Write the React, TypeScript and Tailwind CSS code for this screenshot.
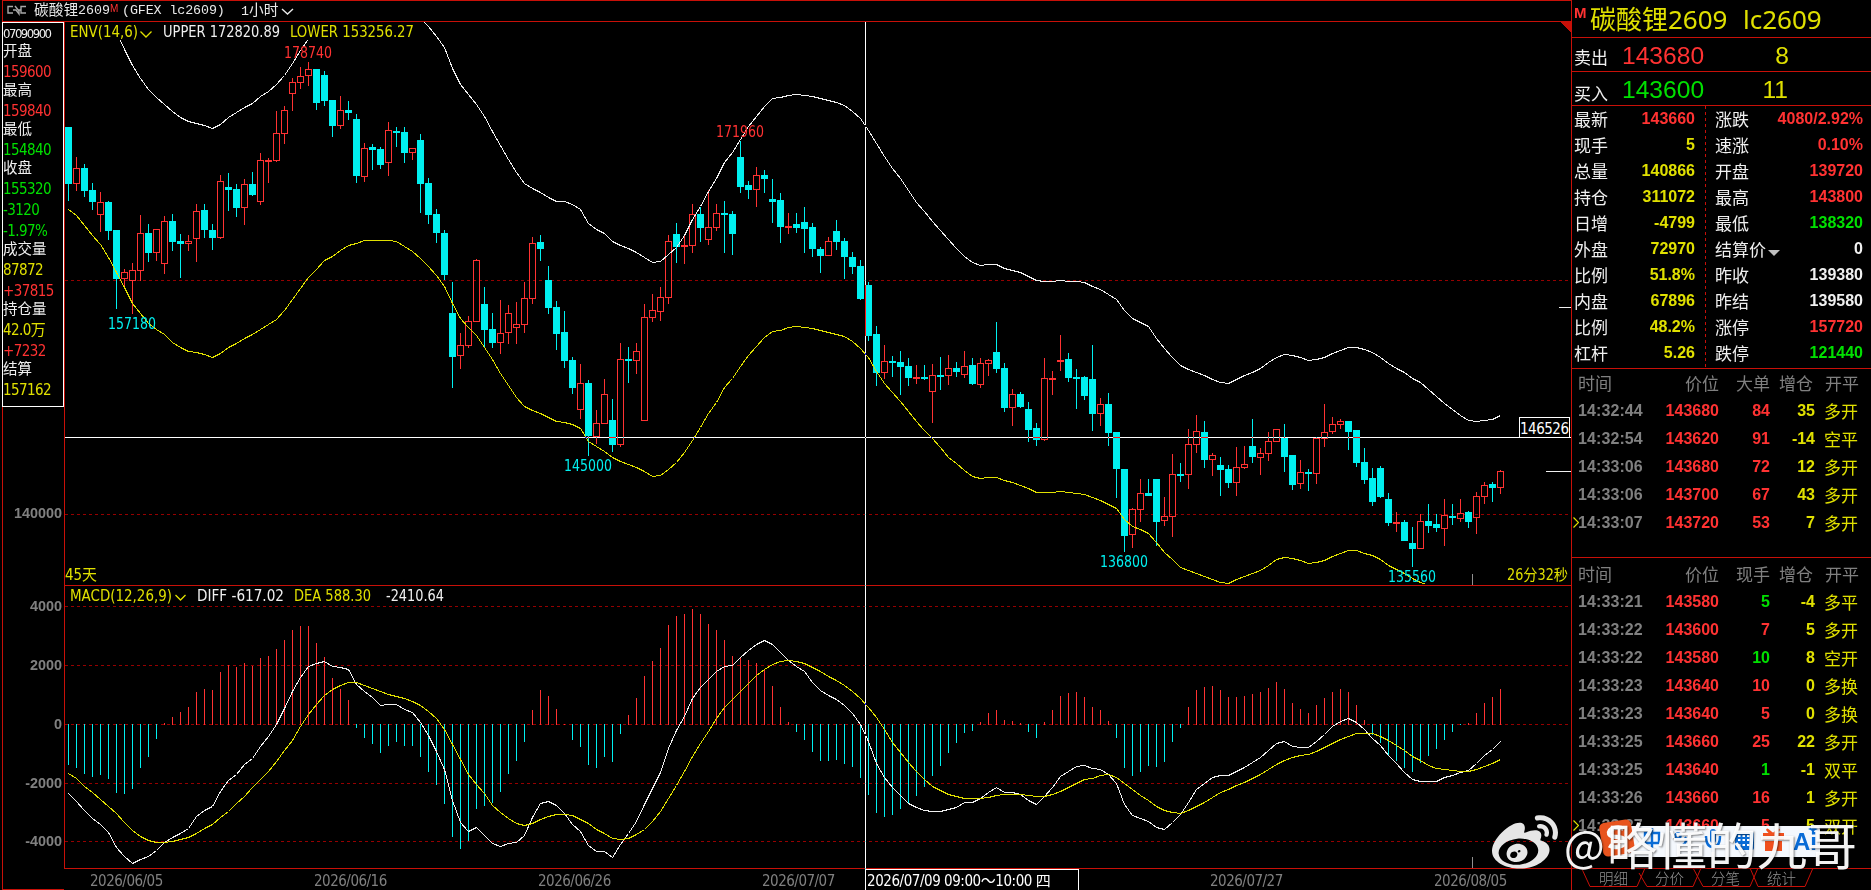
import React from 'react';
import { FaWeibo } from 'react-icons/fa';

// [up, high, bodyTop, bodyBottom, low] in chart pixels, one entry per hour
const CANDLES = [
  [0,127,127,184,201],[1,157,168,183,191],[0,164,168,191,197],[0,183,190,202,210],[1,192,202,214,232],[0,201,202,231,240],
  [0,230,230,279,309],[1,269,272,278,289],[1,263,270,280,314],[1,215,233,270,281],[0,224,233,253,262],[1,229,229,252,261],
  [1,216,221,263,274],[0,214,221,242,251],[0,234,241,244,278],[1,235,241,243,251],[1,204,211,238,262],[0,204,210,230,238],
  [0,224,230,238,250],[1,175,181,237,239],[0,173,187,190,211],[0,184,189,208,217],[1,179,184,207,225],[0,172,184,195,196],
  [1,153,160,201,205],[1,158,160,161,183],[1,111,133,160,162],[1,106,110,133,144],[1,78,82,93,111],[1,67,76,82,89],
  [1,62,69,75,86],[0,69,69,103,110],[0,71,75,101,106],[0,100,100,126,137],[1,96,110,125,129],[0,101,110,113,120],
  [0,114,119,176,183],[1,143,148,176,182],[0,144,147,150,170],[0,147,149,165,169],[1,122,130,162,176],[0,127,131,133,147],
  [0,127,132,153,163],[1,148,148,152,160],[0,134,140,184,213],[0,178,183,215,224],[0,209,214,233,243],[0,230,233,275,280],
  [0,282,313,357,388],[1,333,345,355,369],[1,316,321,345,348],[1,259,260,321,322],[0,287,304,330,348],[0,313,329,343,348],
  [1,300,333,342,354],[1,305,313,332,344],[1,302,324,327,344],[1,282,298,324,333],[1,237,243,298,304],[0,235,242,249,261],
  [0,266,280,308,314],[0,301,307,334,350],[0,311,332,361,368],[0,357,360,388,394],[1,364,383,409,419],[0,380,383,436,456],
  [1,410,423,436,444],[1,379,394,423,424],[0,399,420,445,452],[1,343,359,444,447],[0,347,359,361,383],[1,343,351,360,374],
  [1,304,317,420,421],[1,294,310,317,322],[1,287,297,311,321],[1,235,241,297,304],[0,223,234,247,263],[1,235,245,246,264],
  [1,204,214,245,253],[0,207,214,228,242],[1,190,227,239,245],[1,204,213,227,231],[0,201,213,215,253],[0,211,214,234,255],
  [0,141,157,187,193],[0,181,185,190,199],[1,167,175,189,207],[0,170,175,179,193],[0,179,199,202,223],[0,193,200,227,243],
  [1,213,226,227,234],[0,213,224,228,233],[0,207,222,229,253],[0,223,227,249,257],[0,247,249,256,273],[1,237,241,255,256],
  [0,220,231,242,250],[0,238,241,257,279],[0,252,257,267,274],[0,260,266,299,300],[0,282,285,336,341],[0,326,334,373,386],
  [1,345,361,372,379],[0,356,361,363,377],[0,351,362,367,395],[0,358,366,378,386],[1,365,377,378,384],[0,365,377,379,380],
  [1,364,375,391,423],[0,357,375,377,390],[1,355,368,375,385],[0,362,368,372,377],[1,351,366,374,378],[0,358,365,384,385],
  [1,358,363,384,388],[1,359,360,363,376],[0,322,352,369,373],[0,363,368,408,412],[1,389,394,407,426],[0,392,394,407,408],
  [0,402,409,430,442],[0,423,428,440,446],[1,358,378,439,441],[1,371,378,379,395],[1,335,360,361,371],[0,353,359,378,382],
  [0,369,377,379,409],[0,376,377,396,400],[0,345,379,414,431],[1,398,404,413,426],[0,393,404,433,446],[0,432,432,469,498],
  [0,469,469,536,552],[1,508,509,534,548],[1,479,493,509,522],[0,479,493,496,496],[0,479,479,522,546],[1,497,516,520,526],
  [1,454,474,516,537],[0,463,474,476,482],[1,429,444,474,489],[1,415,431,444,453],[0,421,432,460,468],[1,453,455,459,476],
  [0,457,465,470,496],[0,465,469,483,488],[1,447,467,482,496],[1,446,464,467,469],[0,419,446,457,463],[1,448,453,457,475],
  [1,432,441,453,461],[1,429,429,441,442],[0,424,438,457,472],[0,455,455,485,490],[1,460,472,483,489],[0,469,472,474,491],
  [1,437,438,473,484],[1,404,432,438,447],[1,417,424,431,434],[1,419,421,424,429],[0,421,421,432,450],[0,430,430,463,467],
  [0,448,462,480,484],[0,468,478,502,506],[0,466,468,497,498],[0,493,499,523,526],[1,512,522,523,532],[0,520,522,541,541],
  [0,527,543,549,567],[1,514,521,548,549],[0,504,521,526,533],[0,514,524,528,532],[1,499,515,528,546],[0,504,516,518,525],
  [1,499,513,518,522],[0,511,512,522,528],[1,492,496,517,534],[1,482,485,496,504],[0,482,484,488,502],[1,470,471,487,494],
];

const UPPER = [
  49,65,78,89,97,104,111,117,121,123,125,128,124,117,112,107,103,96,91,84,75,63,50,
];

const UPPER_2 = [
  26,36,47,68,84,94,104,116,131,145,159,172,183,188,192,197,201,201,204,209,223,229,233,241,245,248,252,257,262,261,
  254,247,235,219,206,191,178,162,152,139,126,116,106,98,97,95,94,95,96,98,100,102,105,111,118,130,143,156,168,178,
  190,202,211,221,230,239,248,256,262,265,264,264,268,270,272,276,280,281,281,280,281,281,282,286,289,294,299,310,318,
  322,326,338,348,357,365,369,372,375,379,382,383,379,375,372,368,362,357,354,355,357,360,359,357,353,350,347,347,
  349,352,357,363,368,372,378,382,389,396,403,409,415,420,421,420,419,415,
];

const LOWER = [
  209,215,225,235,244,257,272,287,303,313,323,329,334,342,347,351,352,354,357,353,347,343,338,334,329,324,319,310,299,
  288,277,269,260,256,250,245,243,240,240,240,240,241,246,251,258,266,275,286,303,318,327,335,347,359,373,385,397,406,
  410,413,417,421,422,424,428,441,446,451,457,461,464,467,471,476,475,469,462,452,440,427,413,402,387,378,366,355,346,
  337,331,330,327,326,327,328,330,332,334,336,341,348,357,371,383,392,401,411,421,430,438,447,457,463,470,476,478,477,
  477,480,482,485,488,492,492,492,491,492,493,494,497,500,504,508,519,526,529,533,542,552,559,567,570,573,576,579,582,
  583,579,576,573,570,565,559,557,558,560,563,562,560,556,553,550,550,553,555,559,565,569,573,578,582,
];

const DIFF = [
  793,801,810,818,824,832,847,856,863,859,856,850,842,837,833,828,816,810,806,791,780,774,764,758,746,736,724,708,691,
  677,666,663,661,666,667,669,684,691,697,705,704,704,709,712,722,735,751,769,800,822,831,827,835,843,846,843,842,835,
  817,803,801,805,813,824,831,845,851,851,857,844,833,821,804,788,772,748,730,716,698,687,679,671,666,665,657,650,644,
  640,644,652,660,666,671,682,690,695,699,705,713,724,741,763,777,787,795,803,807,810,811,811,809,807,802,802,798,792,
  787,792,792,794,800,804,796,787,776,771,766,765,768,769,774,783,804,815,818,821,827,829,822,814,802,789,783,777,775,
  775,771,767,762,757,750,743,741,746,747,747,741,734,726,721,718,722,729,738,745,755,763,772,779,781,781,781,777,775,
  772,770,763,755,749,741,
];

const DEA = [
  773,778,786,792,799,806,813,822,830,836,840,842,842,841,839,837,833,828,824,817,811,803,796,787,779,771,761,750,740,
  726,714,704,695,689,685,682,682,685,688,691,694,696,698,701,705,711,718,729,744,759,774,784,793,805,812,818,823,825,
  823,819,816,814,814,815,819,823,829,833,838,839,838,834,829,821,811,798,785,771,756,743,731,718,707,699,691,683,675,
  669,664,661,660,661,663,667,671,676,680,685,691,698,707,717,729,742,752,762,771,779,786,790,794,796,798,798,798,797,
  795,794,794,794,795,796,796,794,791,787,783,779,778,775,774,777,783,789,795,800,806,810,812,813,810,806,802,797,792,
  789,785,782,778,774,769,764,760,757,755,754,751,747,743,739,736,733,733,733,736,740,745,750,756,760,765,768,769,770,
  771,771,769,766,763,759,
];

const BARS = [
  765,768,774,777,775,779,793,794,789,768,757,739,723,717,712,707,692,689,690,672,665,667,663,666,658,656,649,640,630,
  626,626,643,657,678,689,700,728,738,744,753,746,742,746,746,757,772,785,804,837,849,841,809,806,803,792,774,761,742,
  710,690,696,709,724,740,747,765,768,757,762,734,715,698,676,661,648,625,616,614,609,614,624,630,640,656,657,660,663,
  670,686,707,722,732,740,752,761,761,760,764,767,778,795,813,817,815,809,804,796,787,776,766,753,743,733,731,722,713,
  710,720,721,723,732,738,722,710,696,693,692,697,707,710,721,738,768,776,772,766,767,762,742,728,707,690,687,686,690,
  697,697,696,694,692,688,682,689,703,709,713,705,698,692,689,692,705,720,735,743,755,761,768,772,763,756,749,740,732,
  725,723,713,703,697,689,
];

const xAt = (i: number) => 68 + i * 8;
const toPoints = (ys: number[], start = 0) => ys.map((y, i) => `${xAt(i + start) + 0.5},${y + 0.5}`).join(' ');

const SIDE = [
  ['开盘', '159600', 'text-[#ff3232]'],
  ['最高', '159840', 'text-[#ff3232]'],
  ['最低', '154840', 'text-[#00e000]'],
  ['收盘', '155320', 'text-[#00e000]'],
  ['', '-3120', 'text-[#00e000]'],
  ['', '-1.97%', 'text-[#00e000]'],
  ['成交量', '87872', 'text-[#e0e000]'],
  ['', '+37815', 'text-[#ff3232]'],
  ['持仓量', '42.0万', 'text-[#e0e000]'],
  ['', '+7232', 'text-[#ff3232]'],
  ['结算', '157162', 'text-[#e0e000]'],
];

const QUOTES = [
  ['最新', '143660', 'text-[#ff3232]', '涨跌', '4080/2.92%', 'text-[#ff3232]'],
  ['现手', '5', 'text-[#e0e000]', '速涨', '0.10%', 'text-[#ff3232]'],
  ['总量', '140866', 'text-[#e0e000]', '开盘', '139720', 'text-[#ff3232]'],
  ['持仓', '311072', 'text-[#e0e000]', '最高', '143800', 'text-[#ff3232]'],
  ['日增', '-4799', 'text-[#e0e000]', '最低', '138320', 'text-[#00e000]'],
  ['外盘', '72970', 'text-[#e0e000]', '结算价', '0', 'text-[#f0f0f0]'],
  ['比例', '51.8%', 'text-[#e0e000]', '昨收', '139380', 'text-[#f0f0f0]'],
  ['内盘', '67896', 'text-[#e0e000]', '昨结', '139580', 'text-[#f0f0f0]'],
  ['比例', '48.2%', 'text-[#e0e000]', '涨停', '157720', 'text-[#ff3232]'],
  ['杠杆', '5.26', 'text-[#e0e000]', '跌停', '121440', 'text-[#00e000]'],
];

type Trade = [string, string, string, string, string, boolean?];

const BIG_TRADES: Trade[] = [
  ['14:32:44', '143680', '84', '35', '多开'],
  ['14:32:54', '143620', '91', '-14', '空平'],
  ['14:33:06', '143680', '72', '12', '多开'],
  ['14:33:06', '143700', '67', '43', '多开'],
  ['14:33:07', '143720', '53', '7', '多开'],
];

// last flag: the trade hit the bid
const TRADES: Trade[] = [
  ['14:33:21', '143580', '5', '-4', '多平', true],
  ['14:33:22', '143600', '7', '5', '多开'],
  ['14:33:22', '143580', '10', '8', '空开', true],
  ['14:33:23', '143640', '10', '0', '多换'],
  ['14:33:23', '143640', '5', '0', '多换'],
  ['14:33:25', '143660', '25', '22', '多开'],
  ['14:33:25', '143640', '1', '-1', '双平', true],
  ['14:33:26', '143660', '16', '1', '多开'],
  ['14:33:27', '143660', '5', '5', '双开'],
];

const DATES = ['2026/06/05', '2026/06/16', '2026/06/26', '2026/07/07', '', '2026/07/27', '2026/08/05'];

function Label({ x, y, w, fill, children }: { x: number; y: number; w: number; fill: string; children: string }) {
  return (
    <text x={x} y={y} textLength={w} lengthAdjust="spacingAndGlyphs" fill={fill} className="text-[15px]">
      {children}
    </text>
  );
}

function Chart() {
  return (
    <svg width="1506" height="846" viewBox="65 22 1506 846" className="block">
      <g shapeRendering="crispEdges" fill="none">
        {[280, 514, 606, 665, 724, 783, 841].map((y) => (
          <path key={y} d={`M65 ${y + 0.5}H1571`} stroke="#960000" strokeDasharray="3 3" />
        ))}
        {CANDLES.map(([up, high, top, bottom, low], i) => {
          const x = xAt(i);
          return up ? (
            <g key={i} stroke="#ff3232">
              <path d={`M${x + 0.5} ${high}V${top}M${x + 0.5} ${bottom}V${low}`} />
              <rect x={x - 2.5} y={top + 0.5} width="6" height={bottom - top} />
            </g>
          ) : (
            <g key={i}>
              <path d={`M${x + 0.5} ${high}V${low}`} stroke="#00f0f0" />
              <rect x={x - 3} y={top} width="7" height={bottom - top} fill="#00f0f0" />
            </g>
          );
        })}
        {BARS.map((y, i) => (
          <path key={i} d={`M${xAt(i) + 0.5} ${y > 724 ? 724 : 725}V${y}`} stroke={y > 724 ? '#00f0f0' : '#ff3232'} />
        ))}
        <polyline points={`120.5,40.5 ${toPoints(UPPER, 7)} 307.5,40.5`} stroke="#f0f0f0" />
        <polyline points={`424.5,22.5 ${toPoints(UPPER_2, 45)}`} stroke="#f0f0f0" />
        <polyline points={`${toPoints(LOWER)} 1425,584`} stroke="#e0e000" />
        <polyline points={toPoints(DIFF)} stroke="#f0f0f0" />
        <polyline points={toPoints(DEA)} stroke="#e0e000" />
        <path d="M65 585.5H1571" stroke="#c81008" />
        <path d="M1559 307.5H1571M1546 471.5H1571" stroke="#f0f0f0" />
        <path d="M1472.5 574V585M1472.5 857V868" stroke="#909090" />
        <path d="M1560 22H1571V33Z" fill="#c81008" />
      </g>

      <g className="font-['DejaVu_Sans_Condensed','DejaVu_Sans','Noto_Sans_CJK_SC',sans-serif]">
        <Label x={70} y={37} w={68} fill="#e0e000">ENV(14,6)</Label>
        <Label x={163} y={37} w={117} fill="#f0f0f0">UPPER 172820.89</Label>
        <Label x={290} y={37} w={124} fill="#e0e000">LOWER 153256.27</Label>
        <Label x={70} y={601} w={102} fill="#e0e000">MACD(12,26,9)</Label>
        <Label x={197} y={601} w={87} fill="#f0f0f0">DIFF -617.02</Label>
        <Label x={294} y={601} w={77} fill="#e0e000">DEA 588.30</Label>
        <Label x={386} y={601} w={58} fill="#f0f0f0">-2410.64</Label>
        <Label x={284} y={58} w={48} fill="#ff3232">178740</Label>
        <Label x={716} y={137} w={48} fill="#ff3232">171960</Label>
        <Label x={108} y={329} w={48} fill="#00f0f0">157180</Label>
        <Label x={564} y={471} w={48} fill="#00f0f0">145000</Label>
        <Label x={1100} y={567} w={48} fill="#00f0f0">136800</Label>
        <Label x={1388} y={582} w={48} fill="#00f0f0">135560</Label>
        <Label x={65} y={580} w={32} fill="#e0e000">45天</Label>
        <Label x={1507} y={580} w={61} fill="#e0e000">26分32秒</Label>
      </g>
      <path d="M140.5 31.5l5.5 5.5 5.5-5.5M175.5 595l5 5 5-5" fill="none" stroke="#e0e000" strokeWidth="1.3" />
    </svg>
  );
}

function InfoBox() {
  return (
    <div className="h-[385px] w-[62px] border border-white text-[15px] text-[#f0f0f0]">
      <div className="h-[19px] text-[13px] leading-[21px] tracking-[-1.5px]">07090900</div>
      {SIDE.map(([label, value, color]) => (
        <React.Fragment key={value}>
          {label && <div className="h-[18px] text-[14.5px] leading-[19px] whitespace-nowrap">{label}</div>}
          <div className={`h-[21px] leading-[25px] tracking-[-0.6px] whitespace-nowrap ${color}`}>{value}</div>
        </React.Fragment>
      ))}
    </div>
  );
}

function TradeTable({ title, rows, top }: { title: string; rows: Trade[]; top: string }) {
  return (
    <div className={top}>
      <div className="flex h-[28px] pl-[6px] text-[17px] leading-[28px] text-[#808080]">
        <span className="w-[66px]">时间</span>
        <span className="w-[75px] text-right">价位</span>
        <span className="w-[51px] text-right">{title}</span>
        <span className="w-[43px] text-right">增仓</span>
        <span className="ml-[12px]">开平</span>
      </div>
      {rows.map(([time, price, qty, change, kind, bid], i) => (
        <div key={i} className="relative flex h-[28px] pl-[6px] font-['Liberation_Sans',sans-serif] text-[16px] leading-[27px] font-bold text-[#ff3232]">
          {i === rows.length - 1 && (
            <svg width="6" height="11" className="absolute top-[8px] left-[1px]">
              <path d="M.5 .5L5.5 5.5L.5 10.5" fill="none" stroke="#e0e000" strokeWidth="1.2" />
            </svg>
          )}
          <span className="w-[66px] tracking-[0.1px] text-[#808080]">{time}</span>
          <span className="w-[75px] text-right">{price}</span>
          <span className={`w-[51px] text-right ${bid ? 'text-[#00e000]' : ''}`}>{qty}</span>
          <span className="w-[45px] text-right text-[#e0e000]">{change}</span>
          <span className="ml-[9px] font-['Noto_Sans_CJK_SC',sans-serif] text-[17px] font-normal text-[#e0e000]">{kind}</span>
        </div>
      ))}
    </div>
  );
}

function QuotePanel() {
  return (
    <aside className="flex h-[890px] w-[300px] flex-col border-l border-[#c81008] font-['Noto_Sans_CJK_SC',sans-serif]">
      <div className="flex h-[38px] border-b border-[#c81008] pl-[2px]">
        <span className="w-[16px] pt-[4px] font-['Liberation_Sans',sans-serif] text-[15px] leading-[17px] font-bold text-[#ff3232]">M</span>
        <span className="w-[153px] font-['Noto_Sans','Noto_Sans_CJK_SC',sans-serif] text-[26px] leading-[39px] whitespace-nowrap text-[#e0e000]">碳酸锂2609</span>
        <span className="font-['Noto_Sans',sans-serif] text-[26px] leading-[39px] text-[#e0e000]">lc2609</span>
      </div>
      <div className="flex h-[34px] border-b border-[#c81008] pl-[2px] font-['Liberation_Sans',sans-serif] text-[24.6px] leading-[35px] text-[#ff3232]">
        <span className="w-[48px] font-['Noto_Sans_CJK_SC',sans-serif] text-[17px] leading-[38px] text-[#f0f0f0]">卖出</span>
        <span className="w-[100px]">143680</span>
        <span className="w-[67px] text-right text-[#e0e000]">8</span>
      </div>
      <div className="flex h-[34px] border-b border-[#c81008] pl-[2px] font-['Liberation_Sans',sans-serif] text-[24.6px] leading-[36px] text-[#00e000]">
        <span className="w-[48px] font-['Noto_Sans_CJK_SC',sans-serif] text-[17px] leading-[41px] text-[#f0f0f0]">买入</span>
        <span className="w-[100px]">143600</span>
        <span className="w-[66px] text-right text-[#e0e000]">11</span>
      </div>
      <div className="relative h-[263px] border-b border-[#c81008] text-[17px] text-[#f0f0f0]">
        {QUOTES.map(([l1, v1, c1, l2, v2, c2], i) => (
          <div key={i} className="flex h-[26px] pr-[8px] pl-[2px] leading-[25px]">
            <span className="w-[40px]">{l1}</span>
            <span className={`w-[81px] text-right font-['Liberation_Sans',sans-serif] text-[16px] leading-[26px] font-bold ${c1}`}>{v1}</span>
            <span className="ml-[20px] flex whitespace-nowrap">
              {l2}
              {l2 === '结算价' && (
                <svg width="12" height="6" className="mt-[14px] ml-[2px] shrink-0">
                  <path d="M0 0H12L6 6Z" fill="#c0c0c0" />
                </svg>
              )}
            </span>
            <span className={`ml-auto text-right font-['Liberation_Sans',sans-serif] text-[16px] leading-[26px] font-bold whitespace-nowrap ${c2}`}>{v2}</span>
          </div>
        ))}
        <svg width="1" height="261" className="absolute top-0 left-[133px]" shapeRendering="crispEdges">
          <path d="M.5 0V261" stroke="#c81008" strokeDasharray="3 3" />
        </svg>
      </div>
      <div className="h-[189px] border-b border-[#c81008]">
        <TradeTable title="大单" rows={BIG_TRADES} top="pt-[0px]" />
      </div>
      <div className="h-[311px] border-b border-[#c81008]">
        <TradeTable title="现手" rows={TRADES} top="pt-[2px]" />
      </div>
      <div className="relative h-[21px]">
        <svg width="299" height="21" className="absolute top-[-1px] left-0">
          <path
            d="M9.5 0L18 18.5H65L73 0M67 5L75 18.5H121L129 0M121 0L131 18.5H178L186 0M178 0L186 18.5H233L241 0"
            fill="none"
            stroke="#c81008"
          />
        </svg>
        <div className="flex pl-[27px] text-[14.5px] leading-[17px] font-light text-[#909090]">
          {['明细', '分价', '分笔', '统计'].map((t) => (
            <span key={t} className="w-[56px]">{t}</span>
          ))}
        </div>
      </div>
    </aside>
  );
}

function InputBar() {
  return (
    <div className="absolute top-[819px] left-[1598px] flex h-[39px] w-[222px]">
      <div className="absolute top-[7px] left-[14px] h-[31px] w-[208px] rounded-sm bg-[#f4f8fd]" />
      <svg width="222" height="39" className="relative">
        <g transform="rotate(-9 19 19)">
          <rect x="3" y="2" width="32" height="34" rx="5" fill="#e8541e" />
          <path d="M27 11C22 7 11 8 12 14C13 19 26 17 26 23C26 29 15 29 10 25" fill="none" stroke="#fff" strokeWidth="4.5" />
        </g>
        <g stroke="#0a6cd6" strokeWidth="2.4" fill="none">
          <path d="M47 14H61V24H47ZM54 9V31" />
          <circle cx="80" cy="17" r="2.5" />
          <path d="M87 18Q90 22 85 26M108 17Q108 28 115 28Q122 28 122 17M115 28V33" />
        </g>
        <rect x="112" y="10" width="6" height="14" rx="3" fill="#0a6cd6" />
        <rect x="137" y="13" width="19" height="18" rx="2" fill="#0a6cd6" />
        <path d="M140 17H153M140 21H153M140 26H153" stroke="#fff" strokeWidth="2" strokeDasharray="2.5 2" />
        <path d="M165 14H186V21H165ZM167 22H184V32H167Z" fill="#f0501e" />
        <path d="M175 15Q167 8 170 12T175 15Q183 8 180 12" stroke="#f0501e" strokeWidth="2" fill="none" />
        <text x="195" y="31" fill="#0a6cd6" className="font-['Liberation_Sans',sans-serif] text-[24px] font-bold">Ai</text>
        <path d="M215 5l1.500 3.500 3.500 1.500-3.500 1.500-1.500 3.500-1.500-3.500-3.500-1.500 3.500-1.500Z" fill="#0a6cd6" />
      </svg>
    </div>
  );
}

function Watermark() {
  return (
    <>
      <FaWeibo size={66} className="absolute top-[811px] left-[1492px] text-[#e6e6e6]" />
      <div className="absolute top-[809px] left-[1564px] flex font-['Noto_Sans_CJK_SC',sans-serif] leading-[68px] whitespace-nowrap text-white/95 [text-shadow:1px_1px_2px_rgba(0,0,0,0.5)]">
        <span className="w-[43px] text-[43px]">@</span>
        <span className="text-[50px]">略懂的九哥</span>
      </div>
    </>
  );
}

export default function App() {
  return (
    <div className="relative flex h-[890px] w-[1871px] overflow-hidden bg-black font-['DejaVu_Sans_Condensed','DejaVu_Sans','Noto_Sans_CJK_SC',sans-serif]">
      <section className="relative flex h-[890px] w-[1571px] flex-col pl-[2px]">
        <header className="flex h-[22px] border-y border-l border-[#c81008] font-['Liberation_Mono','Noto_Sans_CJK_SC',monospace] text-[13.33px] leading-[20px] text-[#e8e8e8]">
          <svg width="20" height="12" className="mt-[4px] ml-[4px]" fill="none" stroke="#a8a8a8" strokeWidth="1.4">
            <path d="M6 1.500H1V8H6M6 5H9L12 9V5H14M8 1L12 6M19 1.500H14V8H19" />
          </svg>
          <span className="ml-[7px] flex w-[76px] whitespace-nowrap">
            <span className="text-[14.7px]">碳酸锂</span>2609
          </span>
          <span className="w-[12px] font-['Liberation_Sans',sans-serif] text-[10px] leading-[15px] text-[#ff3232]">M</span>
          <span className="w-[119px] tracking-[-0.1px]">(GFEX lc2609)</span>
          <span className="w-[40px] whitespace-nowrap">
            1<span className="text-[14.7px]">小时</span>
          </span>
          <svg width="13" height="8" className="mt-[7px]" fill="none" stroke="#e8e8e8" strokeWidth="1.4">
            <path d="M1 1L6.500 6L12 1" />
          </svg>
        </header>

        <div className="flex h-[847px]">
          <div className="flex w-[62px] flex-col">
            <InfoBox />
            <div className="flex grow flex-col border-l border-[#c81008] pt-[96px] pr-[2px] text-right font-['Liberation_Sans',sans-serif] text-[14.4px] leading-[20px] font-bold text-[#808080]">
              <span className="mb-[73px]">140000</span>
              <span className="mb-[39px]">4000</span>
              <span className="mb-[39px]">2000</span>
              <span className="mb-[39px]">0</span>
              <span className="mb-[38px]">-2000</span>
              <span>-4000</span>
            </div>
          </div>
          <div className="w-[1507px] border-b border-l border-[#c81008]">
            <Chart />
          </div>
        </div>

        <footer className="flex h-[21px] overflow-hidden">
          <div className="w-[62px] shrink-0 border-b border-l border-[#c81008]" />
          <div className="flex pl-[26px] text-[15px] leading-[24px] tracking-[-0.5px] text-[#808080]">
            {DATES.map((d, i) => (
              <span key={i} className="w-[224px] shrink-0">{d}</span>
            ))}
          </div>
        </footer>

        <div className="absolute top-[869px] left-[865px] h-[21px] w-[214px] border-t border-r border-l border-white bg-black pl-px text-[15px] leading-[23px] tracking-[-0.45px] whitespace-nowrap text-white">
          2026/07/09 09:00～10:00 四
        </div>
        <div className="absolute top-[22px] left-[865px] h-[847px] w-px bg-white mix-blend-difference" />
        <div className="absolute top-[437px] left-[65px] h-px w-[1506px] bg-white mix-blend-difference" />
        <div className="absolute top-[417px] left-[1519px] h-[21px] w-[51px] border border-white bg-black text-[15px] leading-[22px] tracking-[-0.5px] text-white">
          146526
        </div>
      </section>

      <QuotePanel />
      <InputBar />
      <Watermark />
    </div>
  );
}
